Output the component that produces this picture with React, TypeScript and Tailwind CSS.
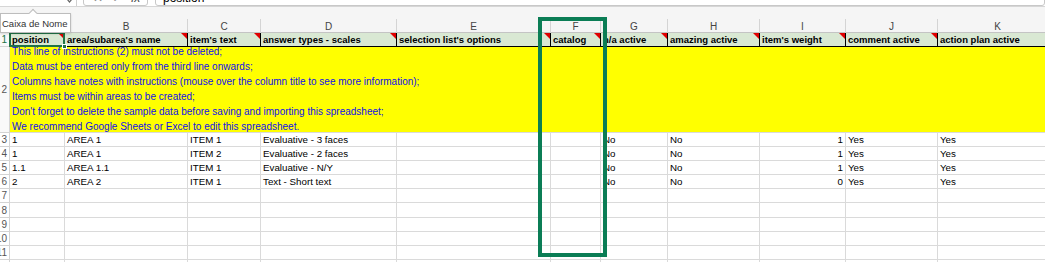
import clsx from "clsx";

const gridCols =
  "grid grid-cols-[10px_55px_123px_73px_136px_154px_50px_67px_92px_86px_92px_120px]";

const letters = ["A", "B", "C", "D", "E", "F", "G", "H", "I", "J", "K"];

const headers = [
  "position",
  "area/subarea's name",
  "item's text",
  "answer types - scales",
  "selection list's options",
  "catalog",
  "n/a active",
  "amazing active",
  "item's weight",
  "comment active",
  "action plan active",
];

const notes = [
  "This line of instructions (2) must not be deleted;",
  "Data must be entered only from the third line onwards;",
  "Columns have notes with instructions (mouse over the column title to see more information);",
  "Items must be within areas to be created;",
  "Don't forget to delete the sample data before saving and importing this spreadsheet;",
  "We recommend Google Sheets or Excel to edit this spreadsheet.",
];

const rows = [
  { n: "3", h: "h-[14px]", v: ["1", "AREA 1", "ITEM 1", "Evaluative - 3 faces", "", "", "No", "No", "1", "Yes", "Yes"] },
  { n: "4", h: "h-[14px]", v: ["1", "AREA 1", "ITEM 2", "Evaluative - 2 faces", "", "", "No", "No", "1", "Yes", "Yes"] },
  { n: "5", h: "h-[14px]", v: ["1.1", "AREA 1.1", "ITEM 1", "Evaluative - N/Y", "", "", "No", "No", "1", "Yes", "Yes"] },
  { n: "6", h: "h-[14px]", v: ["2", "AREA 2", "ITEM 1", "Text - Short text", "", "", "No", "No", "0", "Yes", "Yes"] },
  { n: "7", h: "h-[14px]", v: Array(11).fill("") },
  { n: "8", h: "h-[15px]", v: Array(11).fill("") },
  { n: "9", h: "h-[14px]", v: Array(11).fill("") },
  { n: "10", h: "h-[14px]", v: Array(11).fill("") },
  { n: "11", h: "h-[14px]", v: Array(11).fill("") },
  { n: "12", h: "h-[14px]", v: Array(11).fill("") },
];

function RowNum({ n, className }: { n: string; className?: string }) {
  return (
    <div
      className={clsx(
        "flex items-center justify-end overflow-hidden border-r border-b border-[#d4d4d4] bg-[#f9f9f9] pr-[2px] text-[10px] text-[#555]",
        className
      )}
    >
      <span className="whitespace-nowrap">{n}</span>
    </div>
  );
}

function Flag() {
  return (
    <svg className="absolute top-0 right-0" width="6" height="6" viewBox="0 0 6 6">
      <polygon points="0,0 6,0 6,6" fill="#e00000" />
    </svg>
  );
}

export default function App() {
  return (
    <div className="relative w-[1045px] h-[262px] overflow-hidden bg-white font-['Liberation_Sans',Arial,sans-serif] text-black">
      {/* formula bar, cut at the top */}
      <div className="h-[7px] overflow-hidden border-b border-[#d6d6d6] bg-white">
        <div className="flex h-[22px] -mt-[16px] items-stretch text-[12px] text-[#555]">
          <div className="relative w-[77px] border-r border-[#d0d0d0]">
            <svg className="absolute right-[3px] bottom-[2px]" width="7" height="7" viewBox="0 0 7 7">
              <polyline points="1,2 3.5,5 6,2" fill="none" stroke="#666" strokeWidth="1.2" />
            </svg>
          </div>
          <div className="ml-[6px] flex w-[65px] items-end gap-[9px] rounded-b-[3px] border border-[#c8c8c8] pl-[9px] pb-[1px] leading-none text-[#888]">
            <span>✕</span>
            <span>✓</span>
            <span className="italic text-[#444]">fx</span>
          </div>
          <div className="ml-[7px] flex flex-1 items-end rounded-[3px] border border-[#c8c8c8] pl-[7px] pb-[1px] leading-none text-black">
            position
          </div>
        </div>
      </div>

      <div className="h-[12px] bg-[#f5f5f5]" />

      {/* column letters */}
      <div className={clsx(gridCols, "h-[14px] bg-[#f5f5f5] border-b border-[#c4c4c4]")}>
        <div className="border-r border-[#d4d4d4]" />
        {letters.map((l, i) => (
          <div
            key={l}
            className="flex items-center justify-center border-r border-[#d4d4d4] text-[10px] text-[#444]"
          >
            {i > 0 ? l : ""}
          </div>
        ))}
      </div>

      {/* row 1: titles */}
      <div className={clsx(gridCols, "h-[14px]")}>
        <RowNum n="1" className="bg-[#dcdcdc] !text-[#217346]" />
        {headers.map((h, i) => (
          <div
            key={h}
            className="relative border-r border-b border-black bg-[#d9e8d3] pl-[2px] text-[9.5px] font-bold leading-[13px] whitespace-nowrap"
          >
            {h}
            {i < 10 && <Flag />}
            {i === 0 && (
              <>
                <div className="absolute -inset-[1px] border-2 border-[#217346]" />
                <div className="absolute -right-[3px] -bottom-[3px] z-20 h-[5px] w-[5px] border border-white bg-[#217346]" />
              </>
            )}
          </div>
        ))}
      </div>

      {/* row 2: instructions */}
      <div className={clsx(gridCols, "h-[86px]")}>
        <RowNum n="2" />
        <div className="relative col-span-11 overflow-hidden border-b border-[#dadada] bg-[#ffff00] pl-[2px] text-[10px] text-[#1010e8]">
          <div className="-mt-[3px] flex flex-col">
            {notes.map((t) => (
              <div key={t} className="h-[15px] leading-[15px] whitespace-nowrap">
                {t}
              </div>
            ))}
          </div>
          <div className="absolute bottom-[-1px] left-0 h-px w-[55px] bg-black" />
        </div>
      </div>

      {/* data rows */}
      {rows.map((r) => (
        <div key={r.n} className={clsx(gridCols, r.h)}>
          <RowNum n={r.n} className="bg-white" />
          {r.v.map((v, i) => (
            <div
              key={i}
              className={clsx(
                "border-r border-b border-[#dadada] px-[2px] text-[9.75px] leading-[13px] whitespace-nowrap",
                i === 8 && "text-right"
              )}
            >
              {v}
            </div>
          ))}
        </div>
      ))}

      {/* name box tooltip */}
      <div className="absolute left-0 top-[13px] z-30 h-[20px] w-[71px] border border-[#bdbdbd] bg-white shadow-[0_1px_2px_rgba(0,0,0,0.15)]">
        <div className="absolute -top-[4px] left-[29px] h-[6px] w-[6px] rotate-45 border-t border-l border-[#bdbdbd] bg-white" />
        <div className="relative pl-[1px] pt-[4px] text-[9.5px] leading-[11px] text-[#333] whitespace-nowrap">
          Caixa de Nome
        </div>
      </div>

      {/* highlight around column F */}
      <div className="absolute left-[538px] top-[17px] z-30 h-[240px] w-[69px] border-4 border-[#0b7d55]" />
    </div>
  );
}
